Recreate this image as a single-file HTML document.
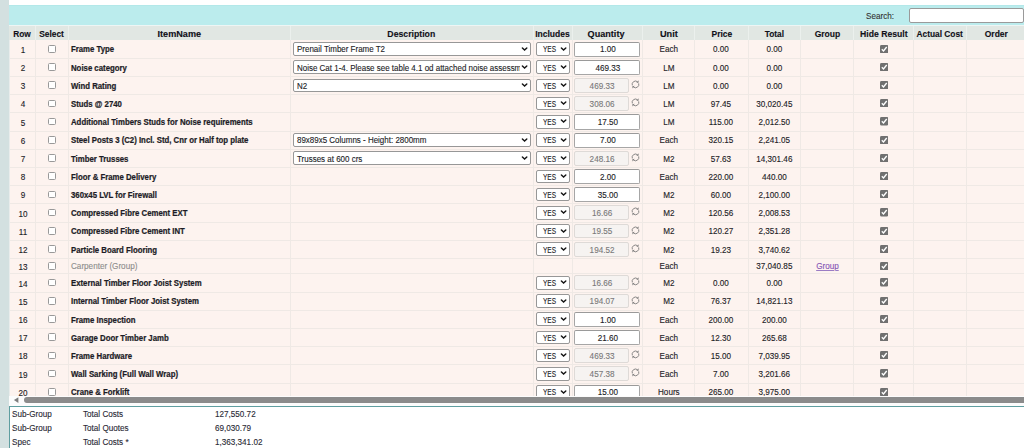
<!DOCTYPE html>
<html><head><meta charset="utf-8"><style>
html,body{margin:0;padding:0;}
body{width:1024px;height:448px;overflow:hidden;position:relative;background:#fff;font-family:"Liberation Sans",sans-serif;color:#1c1c26;}
div{box-sizing:border-box;}
.a{position:absolute;}
.t{position:absolute;white-space:nowrap;font-size:8.4px;transform:scaleX(0.97);-webkit-text-stroke:0.12px currentColor;}
.l{transform-origin:0 50%;}
.c{text-align:center;}
.b{font-weight:bold;}
.hd{font-size:8.8px;font-weight:bold;color:#101018;}
.ln{position:absolute;background:#efe9e5;}
.box{position:absolute;background:#fff;border:1px solid #979797;border-radius:2px;}
.inp{position:absolute;background:#fff;border:1px solid #a6a6a6;border-top-color:#9a9a9a;border-radius:2px;}
.dis{position:absolute;background:#f6f3f1;border:1px solid #dedad7;border-radius:2px;}
.cb{position:absolute;width:8px;height:7.8px;border:1px solid #999;border-radius:1.5px;background:#fff;}
</style></head><body>

<div class="a" style="left:0;top:0;width:8.5px;height:448px;background:#d3e0e0"></div>
<div class="a" style="left:8.5px;top:5px;width:1016px;height:20px;background:#bbeced;border-top:1px solid #b3e8e9"></div>
<div class="t l" style="left:866px;top:10.5px;line-height:10px;color:#333">Search:</div>
<div class="a" style="left:909.4px;top:8.4px;width:114.3px;height:14.6px;background:#fff;border:1px solid #9a9a9a;border-radius:2px"></div>
<div class="a" style="left:8.5px;top:25px;width:1016px;height:371px;background:#e9eceb"></div>
<div class="a" style="left:9.3px;top:25px;width:1016px;height:1px;background:#eef5f4"></div>
<div class="a" style="left:9.3px;top:26px;width:1016px;height:14px;background:#e1e7e3"></div>
<div class="a" style="left:9.7px;top:40px;width:1016px;height:361.2px;background:#fdf3ef"></div>
<div class="a" style="left:34.8px;top:26px;width:1px;height:14px;background:#ebf0ed"></div>
<div class="a" style="left:67.8px;top:26px;width:1px;height:14px;background:#ebf0ed"></div>
<div class="a" style="left:290.4px;top:26px;width:1px;height:14px;background:#ebf0ed"></div>
<div class="a" style="left:533px;top:26px;width:1px;height:14px;background:#ebf0ed"></div>
<div class="a" style="left:571.9px;top:26px;width:1px;height:14px;background:#ebf0ed"></div>
<div class="a" style="left:642px;top:26px;width:1px;height:14px;background:#ebf0ed"></div>
<div class="a" style="left:693.7px;top:26px;width:1px;height:14px;background:#ebf0ed"></div>
<div class="a" style="left:747.5px;top:26px;width:1px;height:14px;background:#ebf0ed"></div>
<div class="a" style="left:800.2px;top:26px;width:1px;height:14px;background:#ebf0ed"></div>
<div class="a" style="left:853.1px;top:26px;width:1px;height:14px;background:#ebf0ed"></div>
<div class="a" style="left:912.8px;top:26px;width:1px;height:14px;background:#ebf0ed"></div>
<div class="a" style="left:966.2px;top:26px;width:1px;height:14px;background:#ebf0ed"></div>
<div class="t c hd" style="left:8.8px;top:26.75px;width:26px;line-height:15px;transform:scaleX(0.943)">Row</div>
<div class="t c hd" style="left:34.7px;top:26.75px;width:33px;line-height:15px;transform:scaleX(0.954)">Select</div>
<div class="t c hd" style="left:68.2px;top:26.75px;width:222.6px;line-height:15px;transform:scaleX(1.035)">ItemName</div>
<div class="t c hd" style="left:290.3px;top:26.75px;width:242.6px;line-height:15px;transform:scaleX(0.989)">Description</div>
<div class="t c hd" style="left:532.5px;top:26.75px;width:38.9px;line-height:15px;transform:scaleX(0.970)">Includes</div>
<div class="t c hd" style="left:571px;top:26.75px;width:70.1px;line-height:15px;transform:scaleX(1.033)">Quantity</div>
<div class="t c hd" style="left:642.7px;top:26.75px;width:51.7px;line-height:15px;transform:scaleX(1.043)">Unit</div>
<div class="t c hd" style="left:694.8px;top:26.75px;width:53.8px;line-height:15px;transform:scaleX(0.965)">Price</div>
<div class="t c hd" style="left:748px;top:26.75px;width:52.7px;line-height:15px;transform:scaleX(0.946)">Total</div>
<div class="t c hd" style="left:800.7px;top:26.75px;width:52.9px;line-height:15px;transform:scaleX(0.970)">Group</div>
<div class="t c hd" style="left:853.6px;top:26.75px;width:59.7px;line-height:15px;transform:scaleX(0.983)">Hide Result</div>
<div class="t c hd" style="left:912.8px;top:26.75px;width:53.4px;line-height:15px;transform:scaleX(0.950)">Actual Cost</div>
<div class="t c hd" style="left:966.7px;top:26.75px;width:58.6px;line-height:15px;transform:scaleX(0.966)">Order</div>
<div class="ln" style="left:9.7px;top:58px;width:1016px;height:1px"></div>
<div class="ln" style="left:9.7px;top:76px;width:1016px;height:1px"></div>
<div class="ln" style="left:9.7px;top:94px;width:1016px;height:1px"></div>
<div class="ln" style="left:9.7px;top:112px;width:1016px;height:1px"></div>
<div class="ln" style="left:9.7px;top:131px;width:1016px;height:1px"></div>
<div class="ln" style="left:9.7px;top:149px;width:1016px;height:1px"></div>
<div class="ln" style="left:9.7px;top:167px;width:1016px;height:1px"></div>
<div class="ln" style="left:9.7px;top:185px;width:1016px;height:1px"></div>
<div class="ln" style="left:9.7px;top:203px;width:1016px;height:1px"></div>
<div class="ln" style="left:9.7px;top:222px;width:1016px;height:1px"></div>
<div class="ln" style="left:9.7px;top:240px;width:1016px;height:1px"></div>
<div class="ln" style="left:9.7px;top:258px;width:1016px;height:1px"></div>
<div class="ln" style="left:9.7px;top:273px;width:1016px;height:1px"></div>
<div class="ln" style="left:9.7px;top:292px;width:1016px;height:1px"></div>
<div class="ln" style="left:9.7px;top:310px;width:1016px;height:1px"></div>
<div class="ln" style="left:9.7px;top:328px;width:1016px;height:1px"></div>
<div class="ln" style="left:9.7px;top:346px;width:1016px;height:1px"></div>
<div class="ln" style="left:9.7px;top:364px;width:1016px;height:1px"></div>
<div class="ln" style="left:9.7px;top:383px;width:1016px;height:1px"></div>
<div class="ln" style="left:9.7px;top:401px;width:1016px;height:1px"></div>
<div class="ln" style="left:34.8px;top:40px;width:1px;height:361.2px"></div>
<div class="ln" style="left:67.8px;top:40px;width:1px;height:361.2px"></div>
<div class="ln" style="left:290.4px;top:40px;width:1px;height:361.2px"></div>
<div class="ln" style="left:533px;top:40px;width:1px;height:361.2px"></div>
<div class="ln" style="left:571.9px;top:40px;width:1px;height:361.2px"></div>
<div class="ln" style="left:642px;top:40px;width:1px;height:361.2px"></div>
<div class="ln" style="left:693.7px;top:40px;width:1px;height:361.2px"></div>
<div class="ln" style="left:747.5px;top:40px;width:1px;height:361.2px"></div>
<div class="ln" style="left:800.2px;top:40px;width:1px;height:361.2px"></div>
<div class="ln" style="left:853.1px;top:40px;width:1px;height:361.2px"></div>
<div class="ln" style="left:912.8px;top:40px;width:1px;height:361.2px"></div>
<div class="ln" style="left:966.2px;top:40px;width:1px;height:361.2px"></div>
<div class="t c" style="left:10.1px;top:40.7px;width:26px;line-height:18.2px;">1</div>
<div class="cb" style="left:48px;top:44.9px"></div>
<div class="t l b" style="left:71px;top:40.4px;line-height:18.2px;transform:scaleX(0.93);-webkit-text-stroke:0.22px currentColor">Frame Type</div>
<div class="box" style="left:293.2px;top:42.2px;width:238.2px;height:13.7px"></div>
<div class="a" style="left:294px;top:40px;width:225.5px;height:18.2px;overflow:hidden"><div class="t l" style="left:2.7px;top:0.4px;line-height:18.2px;transform:scaleX(0.952)">Prenail Timber Frame T2</div></div>
<svg class="a" style="left:520.6px;top:45.6px" width="8" height="6" viewBox="0 0 8 6"><path d="M1.4 1.9 L3.6 4.0 L5.8 1.9" fill="none" stroke="#151515" stroke-width="1.45" stroke-linecap="round"/></svg>
<div class="box" style="left:536.2px;top:42.2px;width:33.5px;height:13.7px"></div>
<div class="t l" style="left:542.6px;top:40.4px;line-height:18.2px;transform:scaleX(0.78)">YES</div>
<svg class="a" style="left:560px;top:45.6px" width="8" height="6" viewBox="0 0 8 6"><path d="M1.4 1.9 L3.6 4.0 L5.8 1.9" fill="none" stroke="#151515" stroke-width="1.45" stroke-linecap="round"/></svg>
<div class="inp" style="left:574px;top:41.5px;width:66.4px;height:15.3px"></div>
<div class="t c" style="left:574.8px;top:40.4px;width:65.7px;line-height:18.2px;">1.00</div>
<div class="t c" style="left:642.5px;top:40.4px;width:51.7px;line-height:18.2px;">Each</div>
<div class="t c" style="left:694.2px;top:40.4px;width:53.8px;line-height:18.2px;">0.00</div>
<div class="t c" style="left:748px;top:40.4px;width:52.7px;line-height:18.2px;">0.00</div>
<svg class="a" style="left:879.6px;top:44.5px" width="8.4" height="8.4" viewBox="0 0 8.4 8.4"><rect x="0" y="0" width="8.4" height="8.4" rx="1.5" fill="#707070"/><path d="M1.8 4.3 L3.5 6 L6.7 2" fill="none" stroke="#fff" stroke-width="1.3"/></svg>
<div class="t c" style="left:10.1px;top:58.9px;width:26px;line-height:18.2px;">2</div>
<div class="cb" style="left:48px;top:63.1px"></div>
<div class="t l b" style="left:71px;top:58.6px;line-height:18.2px;transform:scaleX(0.93);-webkit-text-stroke:0.22px currentColor">Noise category</div>
<div class="box" style="left:293.2px;top:60.4px;width:238.2px;height:13.7px"></div>
<div class="a" style="left:294px;top:58.2px;width:225.5px;height:18.2px;overflow:hidden"><div class="t l" style="left:2.7px;top:0.4px;line-height:18.2px;transform:scaleX(0.952)">Noise Cat 1-4. Please see table 4.1 od attached noise assessment</div></div>
<svg class="a" style="left:520.6px;top:63.8px" width="8" height="6" viewBox="0 0 8 6"><path d="M1.4 1.9 L3.6 4.0 L5.8 1.9" fill="none" stroke="#151515" stroke-width="1.45" stroke-linecap="round"/></svg>
<div class="box" style="left:536.2px;top:60.4px;width:33.5px;height:13.7px"></div>
<div class="t l" style="left:542.6px;top:58.6px;line-height:18.2px;transform:scaleX(0.78)">YES</div>
<svg class="a" style="left:560px;top:63.8px" width="8" height="6" viewBox="0 0 8 6"><path d="M1.4 1.9 L3.6 4.0 L5.8 1.9" fill="none" stroke="#151515" stroke-width="1.45" stroke-linecap="round"/></svg>
<div class="inp" style="left:574px;top:59.7px;width:66.4px;height:15.3px"></div>
<div class="t c" style="left:574.8px;top:58.6px;width:65.7px;line-height:18.2px;">469.33</div>
<div class="t c" style="left:642.5px;top:58.6px;width:51.7px;line-height:18.2px;">LM</div>
<div class="t c" style="left:694.2px;top:58.6px;width:53.8px;line-height:18.2px;">0.00</div>
<div class="t c" style="left:748px;top:58.6px;width:52.7px;line-height:18.2px;">0.00</div>
<svg class="a" style="left:879.6px;top:62.7px" width="8.4" height="8.4" viewBox="0 0 8.4 8.4"><rect x="0" y="0" width="8.4" height="8.4" rx="1.5" fill="#707070"/><path d="M1.8 4.3 L3.5 6 L6.7 2" fill="none" stroke="#fff" stroke-width="1.3"/></svg>
<div class="t c" style="left:10.1px;top:77.1px;width:26px;line-height:18.2px;">3</div>
<div class="cb" style="left:48px;top:81.3px"></div>
<div class="t l b" style="left:71px;top:76.8px;line-height:18.2px;transform:scaleX(0.93);-webkit-text-stroke:0.22px currentColor">Wind Rating</div>
<div class="box" style="left:293.2px;top:78.6px;width:238.2px;height:13.7px"></div>
<div class="a" style="left:294px;top:76.4px;width:225.5px;height:18.2px;overflow:hidden"><div class="t l" style="left:2.7px;top:0.4px;line-height:18.2px;transform:scaleX(0.952)">N2</div></div>
<svg class="a" style="left:520.6px;top:82px" width="8" height="6" viewBox="0 0 8 6"><path d="M1.4 1.9 L3.6 4.0 L5.8 1.9" fill="none" stroke="#151515" stroke-width="1.45" stroke-linecap="round"/></svg>
<div class="box" style="left:536.2px;top:78.6px;width:33.5px;height:13.7px"></div>
<div class="t l" style="left:542.6px;top:76.8px;line-height:18.2px;transform:scaleX(0.78)">YES</div>
<svg class="a" style="left:560px;top:82px" width="8" height="6" viewBox="0 0 8 6"><path d="M1.4 1.9 L3.6 4.0 L5.8 1.9" fill="none" stroke="#151515" stroke-width="1.45" stroke-linecap="round"/></svg>
<div class="dis" style="left:574.3px;top:78px;width:54.4px;height:14.8px"></div>
<div class="t c" style="left:575.1px;top:76.8px;width:54.1px;line-height:18.2px;color:#7a7a7a">469.33</div>
<svg class="a" style="left:630.6px;top:80px" width="9" height="9" viewBox="0 0 9 9"><path d="M1.31 5.44 A3.35 3.35 0 0 1 6.56 1.76" fill="none" stroke="#7a7a7a" stroke-width="0.9"/><path d="M7.67 2.62 L5.36 2.98 L7.45 0.30 Z" fill="#7a7a7a"/><path d="M7.69 3.36 A3.35 3.35 0 0 1 2.44 7.04" fill="none" stroke="#7a7a7a" stroke-width="0.9"/><path d="M1.33 6.18 L3.64 5.82 L1.55 8.50 Z" fill="#7a7a7a"/></svg>
<div class="t c" style="left:642.5px;top:76.8px;width:51.7px;line-height:18.2px;">LM</div>
<div class="t c" style="left:694.2px;top:76.8px;width:53.8px;line-height:18.2px;">0.00</div>
<div class="t c" style="left:748px;top:76.8px;width:52.7px;line-height:18.2px;">0.00</div>
<svg class="a" style="left:879.6px;top:80.9px" width="8.4" height="8.4" viewBox="0 0 8.4 8.4"><rect x="0" y="0" width="8.4" height="8.4" rx="1.5" fill="#707070"/><path d="M1.8 4.3 L3.5 6 L6.7 2" fill="none" stroke="#fff" stroke-width="1.3"/></svg>
<div class="t c" style="left:10.1px;top:95.3px;width:26px;line-height:18.2px;">4</div>
<div class="cb" style="left:48px;top:99.5px"></div>
<div class="t l b" style="left:71px;top:95px;line-height:18.2px;transform:scaleX(0.93);-webkit-text-stroke:0.22px currentColor">Studs @ 2740</div>
<div class="box" style="left:536.2px;top:96.8px;width:33.5px;height:13.7px"></div>
<div class="t l" style="left:542.6px;top:95px;line-height:18.2px;transform:scaleX(0.78)">YES</div>
<svg class="a" style="left:560px;top:100.2px" width="8" height="6" viewBox="0 0 8 6"><path d="M1.4 1.9 L3.6 4.0 L5.8 1.9" fill="none" stroke="#151515" stroke-width="1.45" stroke-linecap="round"/></svg>
<div class="dis" style="left:574.3px;top:96.2px;width:54.4px;height:14.8px"></div>
<div class="t c" style="left:575.1px;top:95px;width:54.1px;line-height:18.2px;color:#7a7a7a">308.06</div>
<svg class="a" style="left:630.6px;top:98.2px" width="9" height="9" viewBox="0 0 9 9"><path d="M1.31 5.44 A3.35 3.35 0 0 1 6.56 1.76" fill="none" stroke="#7a7a7a" stroke-width="0.9"/><path d="M7.67 2.62 L5.36 2.98 L7.45 0.30 Z" fill="#7a7a7a"/><path d="M7.69 3.36 A3.35 3.35 0 0 1 2.44 7.04" fill="none" stroke="#7a7a7a" stroke-width="0.9"/><path d="M1.33 6.18 L3.64 5.82 L1.55 8.50 Z" fill="#7a7a7a"/></svg>
<div class="t c" style="left:642.5px;top:95px;width:51.7px;line-height:18.2px;">LM</div>
<div class="t c" style="left:694.2px;top:95px;width:53.8px;line-height:18.2px;">97.45</div>
<div class="t c" style="left:748px;top:95px;width:52.7px;line-height:18.2px;">30,020.45</div>
<svg class="a" style="left:879.6px;top:99.1px" width="8.4" height="8.4" viewBox="0 0 8.4 8.4"><rect x="0" y="0" width="8.4" height="8.4" rx="1.5" fill="#707070"/><path d="M1.8 4.3 L3.5 6 L6.7 2" fill="none" stroke="#fff" stroke-width="1.3"/></svg>
<div class="t c" style="left:10.1px;top:113.5px;width:26px;line-height:18.2px;">5</div>
<div class="cb" style="left:48px;top:117.7px"></div>
<div class="t l b" style="left:71px;top:113.2px;line-height:18.2px;transform:scaleX(0.93);-webkit-text-stroke:0.22px currentColor">Additional Timbers Studs for Noise requirements</div>
<div class="box" style="left:536.2px;top:115px;width:33.5px;height:13.7px"></div>
<div class="t l" style="left:542.6px;top:113.2px;line-height:18.2px;transform:scaleX(0.78)">YES</div>
<svg class="a" style="left:560px;top:118.4px" width="8" height="6" viewBox="0 0 8 6"><path d="M1.4 1.9 L3.6 4.0 L5.8 1.9" fill="none" stroke="#151515" stroke-width="1.45" stroke-linecap="round"/></svg>
<div class="inp" style="left:574px;top:114.3px;width:66.4px;height:15.3px"></div>
<div class="t c" style="left:574.8px;top:113.2px;width:65.7px;line-height:18.2px;">17.50</div>
<div class="t c" style="left:642.5px;top:113.2px;width:51.7px;line-height:18.2px;">LM</div>
<div class="t c" style="left:694.2px;top:113.2px;width:53.8px;line-height:18.2px;">115.00</div>
<div class="t c" style="left:748px;top:113.2px;width:52.7px;line-height:18.2px;">2,012.50</div>
<svg class="a" style="left:879.6px;top:117.3px" width="8.4" height="8.4" viewBox="0 0 8.4 8.4"><rect x="0" y="0" width="8.4" height="8.4" rx="1.5" fill="#707070"/><path d="M1.8 4.3 L3.5 6 L6.7 2" fill="none" stroke="#fff" stroke-width="1.3"/></svg>
<div class="t c" style="left:10.1px;top:131.7px;width:26px;line-height:18.2px;">6</div>
<div class="cb" style="left:48px;top:135.9px"></div>
<div class="t l b" style="left:71px;top:131.4px;line-height:18.2px;transform:scaleX(0.93);-webkit-text-stroke:0.22px currentColor">Steel Posts 3 (C2) Incl. Std, Cnr or Half top plate</div>
<div class="box" style="left:293.2px;top:133.2px;width:238.2px;height:13.7px"></div>
<div class="a" style="left:294px;top:131px;width:225.5px;height:18.2px;overflow:hidden"><div class="t l" style="left:2.7px;top:0.4px;line-height:18.2px;transform:scaleX(0.952)">89x89x5 Columns - Height: 2800mm</div></div>
<svg class="a" style="left:520.6px;top:136.6px" width="8" height="6" viewBox="0 0 8 6"><path d="M1.4 1.9 L3.6 4.0 L5.8 1.9" fill="none" stroke="#151515" stroke-width="1.45" stroke-linecap="round"/></svg>
<div class="box" style="left:536.2px;top:133.2px;width:33.5px;height:13.7px"></div>
<div class="t l" style="left:542.6px;top:131.4px;line-height:18.2px;transform:scaleX(0.78)">YES</div>
<svg class="a" style="left:560px;top:136.6px" width="8" height="6" viewBox="0 0 8 6"><path d="M1.4 1.9 L3.6 4.0 L5.8 1.9" fill="none" stroke="#151515" stroke-width="1.45" stroke-linecap="round"/></svg>
<div class="inp" style="left:574px;top:132.5px;width:66.4px;height:15.3px"></div>
<div class="t c" style="left:574.8px;top:131.4px;width:65.7px;line-height:18.2px;">7.00</div>
<div class="t c" style="left:642.5px;top:131.4px;width:51.7px;line-height:18.2px;">Each</div>
<div class="t c" style="left:694.2px;top:131.4px;width:53.8px;line-height:18.2px;">320.15</div>
<div class="t c" style="left:748px;top:131.4px;width:52.7px;line-height:18.2px;">2,241.05</div>
<svg class="a" style="left:879.6px;top:135.5px" width="8.4" height="8.4" viewBox="0 0 8.4 8.4"><rect x="0" y="0" width="8.4" height="8.4" rx="1.5" fill="#707070"/><path d="M1.8 4.3 L3.5 6 L6.7 2" fill="none" stroke="#fff" stroke-width="1.3"/></svg>
<div class="t c" style="left:10.1px;top:149.9px;width:26px;line-height:18.2px;">7</div>
<div class="cb" style="left:48px;top:154.1px"></div>
<div class="t l b" style="left:71px;top:149.6px;line-height:18.2px;transform:scaleX(0.93);-webkit-text-stroke:0.22px currentColor">Timber Trusses</div>
<div class="box" style="left:293.2px;top:151.4px;width:238.2px;height:13.7px"></div>
<div class="a" style="left:294px;top:149.2px;width:225.5px;height:18.2px;overflow:hidden"><div class="t l" style="left:2.7px;top:0.4px;line-height:18.2px;transform:scaleX(0.952)">Trusses at 600 crs</div></div>
<svg class="a" style="left:520.6px;top:154.8px" width="8" height="6" viewBox="0 0 8 6"><path d="M1.4 1.9 L3.6 4.0 L5.8 1.9" fill="none" stroke="#151515" stroke-width="1.45" stroke-linecap="round"/></svg>
<div class="box" style="left:536.2px;top:151.4px;width:33.5px;height:13.7px"></div>
<div class="t l" style="left:542.6px;top:149.6px;line-height:18.2px;transform:scaleX(0.78)">YES</div>
<svg class="a" style="left:560px;top:154.8px" width="8" height="6" viewBox="0 0 8 6"><path d="M1.4 1.9 L3.6 4.0 L5.8 1.9" fill="none" stroke="#151515" stroke-width="1.45" stroke-linecap="round"/></svg>
<div class="dis" style="left:574.3px;top:150.8px;width:54.4px;height:14.8px"></div>
<div class="t c" style="left:575.1px;top:149.6px;width:54.1px;line-height:18.2px;color:#7a7a7a">248.16</div>
<svg class="a" style="left:630.6px;top:152.8px" width="9" height="9" viewBox="0 0 9 9"><path d="M1.31 5.44 A3.35 3.35 0 0 1 6.56 1.76" fill="none" stroke="#7a7a7a" stroke-width="0.9"/><path d="M7.67 2.62 L5.36 2.98 L7.45 0.30 Z" fill="#7a7a7a"/><path d="M7.69 3.36 A3.35 3.35 0 0 1 2.44 7.04" fill="none" stroke="#7a7a7a" stroke-width="0.9"/><path d="M1.33 6.18 L3.64 5.82 L1.55 8.50 Z" fill="#7a7a7a"/></svg>
<div class="t c" style="left:642.5px;top:149.6px;width:51.7px;line-height:18.2px;">M2</div>
<div class="t c" style="left:694.2px;top:149.6px;width:53.8px;line-height:18.2px;">57.63</div>
<div class="t c" style="left:748px;top:149.6px;width:52.7px;line-height:18.2px;">14,301.46</div>
<svg class="a" style="left:879.6px;top:153.7px" width="8.4" height="8.4" viewBox="0 0 8.4 8.4"><rect x="0" y="0" width="8.4" height="8.4" rx="1.5" fill="#707070"/><path d="M1.8 4.3 L3.5 6 L6.7 2" fill="none" stroke="#fff" stroke-width="1.3"/></svg>
<div class="t c" style="left:10.1px;top:168.1px;width:26px;line-height:18.2px;">8</div>
<div class="cb" style="left:48px;top:172.3px"></div>
<div class="t l b" style="left:71px;top:167.8px;line-height:18.2px;transform:scaleX(0.93);-webkit-text-stroke:0.22px currentColor">Floor &amp; Frame Delivery</div>
<div class="box" style="left:536.2px;top:169.6px;width:33.5px;height:13.7px"></div>
<div class="t l" style="left:542.6px;top:167.8px;line-height:18.2px;transform:scaleX(0.78)">YES</div>
<svg class="a" style="left:560px;top:173px" width="8" height="6" viewBox="0 0 8 6"><path d="M1.4 1.9 L3.6 4.0 L5.8 1.9" fill="none" stroke="#151515" stroke-width="1.45" stroke-linecap="round"/></svg>
<div class="inp" style="left:574px;top:168.9px;width:66.4px;height:15.3px"></div>
<div class="t c" style="left:574.8px;top:167.8px;width:65.7px;line-height:18.2px;">2.00</div>
<div class="t c" style="left:642.5px;top:167.8px;width:51.7px;line-height:18.2px;">Each</div>
<div class="t c" style="left:694.2px;top:167.8px;width:53.8px;line-height:18.2px;">220.00</div>
<div class="t c" style="left:748px;top:167.8px;width:52.7px;line-height:18.2px;">440.00</div>
<svg class="a" style="left:879.6px;top:171.9px" width="8.4" height="8.4" viewBox="0 0 8.4 8.4"><rect x="0" y="0" width="8.4" height="8.4" rx="1.5" fill="#707070"/><path d="M1.8 4.3 L3.5 6 L6.7 2" fill="none" stroke="#fff" stroke-width="1.3"/></svg>
<div class="t c" style="left:10.1px;top:186.3px;width:26px;line-height:18.2px;">9</div>
<div class="cb" style="left:48px;top:190.5px"></div>
<div class="t l b" style="left:71px;top:186px;line-height:18.2px;transform:scaleX(0.93);-webkit-text-stroke:0.22px currentColor">360x45 LVL for Firewall</div>
<div class="box" style="left:536.2px;top:187.8px;width:33.5px;height:13.7px"></div>
<div class="t l" style="left:542.6px;top:186px;line-height:18.2px;transform:scaleX(0.78)">YES</div>
<svg class="a" style="left:560px;top:191.2px" width="8" height="6" viewBox="0 0 8 6"><path d="M1.4 1.9 L3.6 4.0 L5.8 1.9" fill="none" stroke="#151515" stroke-width="1.45" stroke-linecap="round"/></svg>
<div class="inp" style="left:574px;top:187.1px;width:66.4px;height:15.3px"></div>
<div class="t c" style="left:574.8px;top:186px;width:65.7px;line-height:18.2px;">35.00</div>
<div class="t c" style="left:642.5px;top:186px;width:51.7px;line-height:18.2px;">M2</div>
<div class="t c" style="left:694.2px;top:186px;width:53.8px;line-height:18.2px;">60.00</div>
<div class="t c" style="left:748px;top:186px;width:52.7px;line-height:18.2px;">2,100.00</div>
<svg class="a" style="left:879.6px;top:190.1px" width="8.4" height="8.4" viewBox="0 0 8.4 8.4"><rect x="0" y="0" width="8.4" height="8.4" rx="1.5" fill="#707070"/><path d="M1.8 4.3 L3.5 6 L6.7 2" fill="none" stroke="#fff" stroke-width="1.3"/></svg>
<div class="t c" style="left:10.1px;top:204.5px;width:26px;line-height:18.2px;">10</div>
<div class="cb" style="left:48px;top:208.7px"></div>
<div class="t l b" style="left:71px;top:204.2px;line-height:18.2px;transform:scaleX(0.93);-webkit-text-stroke:0.22px currentColor">Compressed Fibre Cement EXT</div>
<div class="box" style="left:536.2px;top:206px;width:33.5px;height:13.7px"></div>
<div class="t l" style="left:542.6px;top:204.2px;line-height:18.2px;transform:scaleX(0.78)">YES</div>
<svg class="a" style="left:560px;top:209.4px" width="8" height="6" viewBox="0 0 8 6"><path d="M1.4 1.9 L3.6 4.0 L5.8 1.9" fill="none" stroke="#151515" stroke-width="1.45" stroke-linecap="round"/></svg>
<div class="dis" style="left:574.3px;top:205.4px;width:54.4px;height:14.8px"></div>
<div class="t c" style="left:575.1px;top:204.2px;width:54.1px;line-height:18.2px;color:#7a7a7a">16.66</div>
<svg class="a" style="left:630.6px;top:207.4px" width="9" height="9" viewBox="0 0 9 9"><path d="M1.31 5.44 A3.35 3.35 0 0 1 6.56 1.76" fill="none" stroke="#7a7a7a" stroke-width="0.9"/><path d="M7.67 2.62 L5.36 2.98 L7.45 0.30 Z" fill="#7a7a7a"/><path d="M7.69 3.36 A3.35 3.35 0 0 1 2.44 7.04" fill="none" stroke="#7a7a7a" stroke-width="0.9"/><path d="M1.33 6.18 L3.64 5.82 L1.55 8.50 Z" fill="#7a7a7a"/></svg>
<div class="t c" style="left:642.5px;top:204.2px;width:51.7px;line-height:18.2px;">M2</div>
<div class="t c" style="left:694.2px;top:204.2px;width:53.8px;line-height:18.2px;">120.56</div>
<div class="t c" style="left:748px;top:204.2px;width:52.7px;line-height:18.2px;">2,008.53</div>
<svg class="a" style="left:879.6px;top:208.3px" width="8.4" height="8.4" viewBox="0 0 8.4 8.4"><rect x="0" y="0" width="8.4" height="8.4" rx="1.5" fill="#707070"/><path d="M1.8 4.3 L3.5 6 L6.7 2" fill="none" stroke="#fff" stroke-width="1.3"/></svg>
<div class="t c" style="left:10.1px;top:222.7px;width:26px;line-height:18.2px;">11</div>
<div class="cb" style="left:48px;top:226.9px"></div>
<div class="t l b" style="left:71px;top:222.4px;line-height:18.2px;transform:scaleX(0.93);-webkit-text-stroke:0.22px currentColor">Compressed Fibre Cement INT</div>
<div class="box" style="left:536.2px;top:224.2px;width:33.5px;height:13.7px"></div>
<div class="t l" style="left:542.6px;top:222.4px;line-height:18.2px;transform:scaleX(0.78)">YES</div>
<svg class="a" style="left:560px;top:227.6px" width="8" height="6" viewBox="0 0 8 6"><path d="M1.4 1.9 L3.6 4.0 L5.8 1.9" fill="none" stroke="#151515" stroke-width="1.45" stroke-linecap="round"/></svg>
<div class="dis" style="left:574.3px;top:223.6px;width:54.4px;height:14.8px"></div>
<div class="t c" style="left:575.1px;top:222.4px;width:54.1px;line-height:18.2px;color:#7a7a7a">19.55</div>
<svg class="a" style="left:630.6px;top:225.6px" width="9" height="9" viewBox="0 0 9 9"><path d="M1.31 5.44 A3.35 3.35 0 0 1 6.56 1.76" fill="none" stroke="#7a7a7a" stroke-width="0.9"/><path d="M7.67 2.62 L5.36 2.98 L7.45 0.30 Z" fill="#7a7a7a"/><path d="M7.69 3.36 A3.35 3.35 0 0 1 2.44 7.04" fill="none" stroke="#7a7a7a" stroke-width="0.9"/><path d="M1.33 6.18 L3.64 5.82 L1.55 8.50 Z" fill="#7a7a7a"/></svg>
<div class="t c" style="left:642.5px;top:222.4px;width:51.7px;line-height:18.2px;">M2</div>
<div class="t c" style="left:694.2px;top:222.4px;width:53.8px;line-height:18.2px;">120.27</div>
<div class="t c" style="left:748px;top:222.4px;width:52.7px;line-height:18.2px;">2,351.28</div>
<svg class="a" style="left:879.6px;top:226.5px" width="8.4" height="8.4" viewBox="0 0 8.4 8.4"><rect x="0" y="0" width="8.4" height="8.4" rx="1.5" fill="#707070"/><path d="M1.8 4.3 L3.5 6 L6.7 2" fill="none" stroke="#fff" stroke-width="1.3"/></svg>
<div class="t c" style="left:10.1px;top:240.9px;width:26px;line-height:18.2px;">12</div>
<div class="cb" style="left:48px;top:245.1px"></div>
<div class="t l b" style="left:71px;top:240.6px;line-height:18.2px;transform:scaleX(0.93);-webkit-text-stroke:0.22px currentColor">Particle Board Flooring</div>
<div class="box" style="left:536.2px;top:242.4px;width:33.5px;height:13.7px"></div>
<div class="t l" style="left:542.6px;top:240.6px;line-height:18.2px;transform:scaleX(0.78)">YES</div>
<svg class="a" style="left:560px;top:245.8px" width="8" height="6" viewBox="0 0 8 6"><path d="M1.4 1.9 L3.6 4.0 L5.8 1.9" fill="none" stroke="#151515" stroke-width="1.45" stroke-linecap="round"/></svg>
<div class="dis" style="left:574.3px;top:241.8px;width:54.4px;height:14.8px"></div>
<div class="t c" style="left:575.1px;top:240.6px;width:54.1px;line-height:18.2px;color:#7a7a7a">194.52</div>
<svg class="a" style="left:630.6px;top:243.8px" width="9" height="9" viewBox="0 0 9 9"><path d="M1.31 5.44 A3.35 3.35 0 0 1 6.56 1.76" fill="none" stroke="#7a7a7a" stroke-width="0.9"/><path d="M7.67 2.62 L5.36 2.98 L7.45 0.30 Z" fill="#7a7a7a"/><path d="M7.69 3.36 A3.35 3.35 0 0 1 2.44 7.04" fill="none" stroke="#7a7a7a" stroke-width="0.9"/><path d="M1.33 6.18 L3.64 5.82 L1.55 8.50 Z" fill="#7a7a7a"/></svg>
<div class="t c" style="left:642.5px;top:240.6px;width:51.7px;line-height:18.2px;">M2</div>
<div class="t c" style="left:694.2px;top:240.6px;width:53.8px;line-height:18.2px;">19.23</div>
<div class="t c" style="left:748px;top:240.6px;width:52.7px;line-height:18.2px;">3,740.62</div>
<svg class="a" style="left:879.6px;top:244.7px" width="8.4" height="8.4" viewBox="0 0 8.4 8.4"><rect x="0" y="0" width="8.4" height="8.4" rx="1.5" fill="#707070"/><path d="M1.8 4.3 L3.5 6 L6.7 2" fill="none" stroke="#fff" stroke-width="1.3"/></svg>
<div class="t c" style="left:10.1px;top:259.5px;width:26px;line-height:15.4px;">13</div>
<div class="cb" style="left:48px;top:262.3px"></div>
<div class="t l" style="left:71px;top:259.2px;line-height:15.4px;color:#8d8d8d">Carpenter (Group)</div>
<div class="t c" style="left:642.5px;top:259.2px;width:51.7px;line-height:15.4px;">Each</div>
<div class="t c" style="left:748px;top:259.2px;width:52.7px;line-height:15.4px;">37,040.85</div>
<div class="t c" style="left:800.7px;top:259.2px;width:52.9px;line-height:15.4px;color:#8655b6;text-decoration:underline;text-decoration-color:#9b7cc4">Group</div>
<svg class="a" style="left:879.6px;top:261.9px" width="8.4" height="8.4" viewBox="0 0 8.4 8.4"><rect x="0" y="0" width="8.4" height="8.4" rx="1.5" fill="#707070"/><path d="M1.8 4.3 L3.5 6 L6.7 2" fill="none" stroke="#fff" stroke-width="1.3"/></svg>
<div class="t c" style="left:10.1px;top:274.5px;width:26px;line-height:18.2px;">14</div>
<div class="cb" style="left:48px;top:278.7px"></div>
<div class="t l b" style="left:71px;top:274.2px;line-height:18.2px;transform:scaleX(0.93);-webkit-text-stroke:0.22px currentColor">External Timber Floor Joist System</div>
<div class="box" style="left:536.2px;top:276px;width:33.5px;height:13.7px"></div>
<div class="t l" style="left:542.6px;top:274.2px;line-height:18.2px;transform:scaleX(0.78)">YES</div>
<svg class="a" style="left:560px;top:279.4px" width="8" height="6" viewBox="0 0 8 6"><path d="M1.4 1.9 L3.6 4.0 L5.8 1.9" fill="none" stroke="#151515" stroke-width="1.45" stroke-linecap="round"/></svg>
<div class="dis" style="left:574.3px;top:275.4px;width:54.4px;height:14.8px"></div>
<div class="t c" style="left:575.1px;top:274.2px;width:54.1px;line-height:18.2px;color:#7a7a7a">16.66</div>
<svg class="a" style="left:630.6px;top:277.4px" width="9" height="9" viewBox="0 0 9 9"><path d="M1.31 5.44 A3.35 3.35 0 0 1 6.56 1.76" fill="none" stroke="#7a7a7a" stroke-width="0.9"/><path d="M7.67 2.62 L5.36 2.98 L7.45 0.30 Z" fill="#7a7a7a"/><path d="M7.69 3.36 A3.35 3.35 0 0 1 2.44 7.04" fill="none" stroke="#7a7a7a" stroke-width="0.9"/><path d="M1.33 6.18 L3.64 5.82 L1.55 8.50 Z" fill="#7a7a7a"/></svg>
<div class="t c" style="left:642.5px;top:274.2px;width:51.7px;line-height:18.2px;">M2</div>
<div class="t c" style="left:694.2px;top:274.2px;width:53.8px;line-height:18.2px;">0.00</div>
<div class="t c" style="left:748px;top:274.2px;width:52.7px;line-height:18.2px;">0.00</div>
<svg class="a" style="left:879.6px;top:278.3px" width="8.4" height="8.4" viewBox="0 0 8.4 8.4"><rect x="0" y="0" width="8.4" height="8.4" rx="1.5" fill="#707070"/><path d="M1.8 4.3 L3.5 6 L6.7 2" fill="none" stroke="#fff" stroke-width="1.3"/></svg>
<div class="t c" style="left:10.1px;top:292.7px;width:26px;line-height:18.2px;">15</div>
<div class="cb" style="left:48px;top:296.9px"></div>
<div class="t l b" style="left:71px;top:292.4px;line-height:18.2px;transform:scaleX(0.93);-webkit-text-stroke:0.22px currentColor">Internal Timber Floor Joist System</div>
<div class="box" style="left:536.2px;top:294.2px;width:33.5px;height:13.7px"></div>
<div class="t l" style="left:542.6px;top:292.4px;line-height:18.2px;transform:scaleX(0.78)">YES</div>
<svg class="a" style="left:560px;top:297.6px" width="8" height="6" viewBox="0 0 8 6"><path d="M1.4 1.9 L3.6 4.0 L5.8 1.9" fill="none" stroke="#151515" stroke-width="1.45" stroke-linecap="round"/></svg>
<div class="dis" style="left:574.3px;top:293.6px;width:54.4px;height:14.8px"></div>
<div class="t c" style="left:575.1px;top:292.4px;width:54.1px;line-height:18.2px;color:#7a7a7a">194.07</div>
<svg class="a" style="left:630.6px;top:295.6px" width="9" height="9" viewBox="0 0 9 9"><path d="M1.31 5.44 A3.35 3.35 0 0 1 6.56 1.76" fill="none" stroke="#7a7a7a" stroke-width="0.9"/><path d="M7.67 2.62 L5.36 2.98 L7.45 0.30 Z" fill="#7a7a7a"/><path d="M7.69 3.36 A3.35 3.35 0 0 1 2.44 7.04" fill="none" stroke="#7a7a7a" stroke-width="0.9"/><path d="M1.33 6.18 L3.64 5.82 L1.55 8.50 Z" fill="#7a7a7a"/></svg>
<div class="t c" style="left:642.5px;top:292.4px;width:51.7px;line-height:18.2px;">M2</div>
<div class="t c" style="left:694.2px;top:292.4px;width:53.8px;line-height:18.2px;">76.37</div>
<div class="t c" style="left:748px;top:292.4px;width:52.7px;line-height:18.2px;">14,821.13</div>
<svg class="a" style="left:879.6px;top:296.5px" width="8.4" height="8.4" viewBox="0 0 8.4 8.4"><rect x="0" y="0" width="8.4" height="8.4" rx="1.5" fill="#707070"/><path d="M1.8 4.3 L3.5 6 L6.7 2" fill="none" stroke="#fff" stroke-width="1.3"/></svg>
<div class="t c" style="left:10.1px;top:310.9px;width:26px;line-height:18.2px;">16</div>
<div class="cb" style="left:48px;top:315.1px"></div>
<div class="t l b" style="left:71px;top:310.6px;line-height:18.2px;transform:scaleX(0.93);-webkit-text-stroke:0.22px currentColor">Frame Inspection</div>
<div class="box" style="left:536.2px;top:312.4px;width:33.5px;height:13.7px"></div>
<div class="t l" style="left:542.6px;top:310.6px;line-height:18.2px;transform:scaleX(0.78)">YES</div>
<svg class="a" style="left:560px;top:315.8px" width="8" height="6" viewBox="0 0 8 6"><path d="M1.4 1.9 L3.6 4.0 L5.8 1.9" fill="none" stroke="#151515" stroke-width="1.45" stroke-linecap="round"/></svg>
<div class="inp" style="left:574px;top:311.7px;width:66.4px;height:15.3px"></div>
<div class="t c" style="left:574.8px;top:310.6px;width:65.7px;line-height:18.2px;">1.00</div>
<div class="t c" style="left:642.5px;top:310.6px;width:51.7px;line-height:18.2px;">Each</div>
<div class="t c" style="left:694.2px;top:310.6px;width:53.8px;line-height:18.2px;">200.00</div>
<div class="t c" style="left:748px;top:310.6px;width:52.7px;line-height:18.2px;">200.00</div>
<svg class="a" style="left:879.6px;top:314.7px" width="8.4" height="8.4" viewBox="0 0 8.4 8.4"><rect x="0" y="0" width="8.4" height="8.4" rx="1.5" fill="#707070"/><path d="M1.8 4.3 L3.5 6 L6.7 2" fill="none" stroke="#fff" stroke-width="1.3"/></svg>
<div class="t c" style="left:10.1px;top:329.1px;width:26px;line-height:18.2px;">17</div>
<div class="cb" style="left:48px;top:333.3px"></div>
<div class="t l b" style="left:71px;top:328.8px;line-height:18.2px;transform:scaleX(0.93);-webkit-text-stroke:0.22px currentColor">Garage Door Timber Jamb</div>
<div class="box" style="left:536.2px;top:330.6px;width:33.5px;height:13.7px"></div>
<div class="t l" style="left:542.6px;top:328.8px;line-height:18.2px;transform:scaleX(0.78)">YES</div>
<svg class="a" style="left:560px;top:334px" width="8" height="6" viewBox="0 0 8 6"><path d="M1.4 1.9 L3.6 4.0 L5.8 1.9" fill="none" stroke="#151515" stroke-width="1.45" stroke-linecap="round"/></svg>
<div class="inp" style="left:574px;top:329.9px;width:66.4px;height:15.3px"></div>
<div class="t c" style="left:574.8px;top:328.8px;width:65.7px;line-height:18.2px;">21.60</div>
<div class="t c" style="left:642.5px;top:328.8px;width:51.7px;line-height:18.2px;">Each</div>
<div class="t c" style="left:694.2px;top:328.8px;width:53.8px;line-height:18.2px;">12.30</div>
<div class="t c" style="left:748px;top:328.8px;width:52.7px;line-height:18.2px;">265.68</div>
<svg class="a" style="left:879.6px;top:332.9px" width="8.4" height="8.4" viewBox="0 0 8.4 8.4"><rect x="0" y="0" width="8.4" height="8.4" rx="1.5" fill="#707070"/><path d="M1.8 4.3 L3.5 6 L6.7 2" fill="none" stroke="#fff" stroke-width="1.3"/></svg>
<div class="t c" style="left:10.1px;top:347.3px;width:26px;line-height:18.2px;">18</div>
<div class="cb" style="left:48px;top:351.5px"></div>
<div class="t l b" style="left:71px;top:347px;line-height:18.2px;transform:scaleX(0.93);-webkit-text-stroke:0.22px currentColor">Frame Hardware</div>
<div class="box" style="left:536.2px;top:348.8px;width:33.5px;height:13.7px"></div>
<div class="t l" style="left:542.6px;top:347px;line-height:18.2px;transform:scaleX(0.78)">YES</div>
<svg class="a" style="left:560px;top:352.2px" width="8" height="6" viewBox="0 0 8 6"><path d="M1.4 1.9 L3.6 4.0 L5.8 1.9" fill="none" stroke="#151515" stroke-width="1.45" stroke-linecap="round"/></svg>
<div class="dis" style="left:574.3px;top:348.2px;width:54.4px;height:14.8px"></div>
<div class="t c" style="left:575.1px;top:347px;width:54.1px;line-height:18.2px;color:#7a7a7a">469.33</div>
<svg class="a" style="left:630.6px;top:350.2px" width="9" height="9" viewBox="0 0 9 9"><path d="M1.31 5.44 A3.35 3.35 0 0 1 6.56 1.76" fill="none" stroke="#7a7a7a" stroke-width="0.9"/><path d="M7.67 2.62 L5.36 2.98 L7.45 0.30 Z" fill="#7a7a7a"/><path d="M7.69 3.36 A3.35 3.35 0 0 1 2.44 7.04" fill="none" stroke="#7a7a7a" stroke-width="0.9"/><path d="M1.33 6.18 L3.64 5.82 L1.55 8.50 Z" fill="#7a7a7a"/></svg>
<div class="t c" style="left:642.5px;top:347px;width:51.7px;line-height:18.2px;">Each</div>
<div class="t c" style="left:694.2px;top:347px;width:53.8px;line-height:18.2px;">15.00</div>
<div class="t c" style="left:748px;top:347px;width:52.7px;line-height:18.2px;">7,039.95</div>
<svg class="a" style="left:879.6px;top:351.1px" width="8.4" height="8.4" viewBox="0 0 8.4 8.4"><rect x="0" y="0" width="8.4" height="8.4" rx="1.5" fill="#707070"/><path d="M1.8 4.3 L3.5 6 L6.7 2" fill="none" stroke="#fff" stroke-width="1.3"/></svg>
<div class="t c" style="left:10.1px;top:365.5px;width:26px;line-height:18.2px;">19</div>
<div class="cb" style="left:48px;top:369.7px"></div>
<div class="t l b" style="left:71px;top:365.2px;line-height:18.2px;transform:scaleX(0.93);-webkit-text-stroke:0.22px currentColor">Wall Sarking (Full Wall Wrap)</div>
<div class="box" style="left:536.2px;top:367px;width:33.5px;height:13.7px"></div>
<div class="t l" style="left:542.6px;top:365.2px;line-height:18.2px;transform:scaleX(0.78)">YES</div>
<svg class="a" style="left:560px;top:370.4px" width="8" height="6" viewBox="0 0 8 6"><path d="M1.4 1.9 L3.6 4.0 L5.8 1.9" fill="none" stroke="#151515" stroke-width="1.45" stroke-linecap="round"/></svg>
<div class="dis" style="left:574.3px;top:366.4px;width:54.4px;height:14.8px"></div>
<div class="t c" style="left:575.1px;top:365.2px;width:54.1px;line-height:18.2px;color:#7a7a7a">457.38</div>
<svg class="a" style="left:630.6px;top:368.4px" width="9" height="9" viewBox="0 0 9 9"><path d="M1.31 5.44 A3.35 3.35 0 0 1 6.56 1.76" fill="none" stroke="#7a7a7a" stroke-width="0.9"/><path d="M7.67 2.62 L5.36 2.98 L7.45 0.30 Z" fill="#7a7a7a"/><path d="M7.69 3.36 A3.35 3.35 0 0 1 2.44 7.04" fill="none" stroke="#7a7a7a" stroke-width="0.9"/><path d="M1.33 6.18 L3.64 5.82 L1.55 8.50 Z" fill="#7a7a7a"/></svg>
<div class="t c" style="left:642.5px;top:365.2px;width:51.7px;line-height:18.2px;">Each</div>
<div class="t c" style="left:694.2px;top:365.2px;width:53.8px;line-height:18.2px;">7.00</div>
<div class="t c" style="left:748px;top:365.2px;width:52.7px;line-height:18.2px;">3,201.66</div>
<svg class="a" style="left:879.6px;top:369.3px" width="8.4" height="8.4" viewBox="0 0 8.4 8.4"><rect x="0" y="0" width="8.4" height="8.4" rx="1.5" fill="#707070"/><path d="M1.8 4.3 L3.5 6 L6.7 2" fill="none" stroke="#fff" stroke-width="1.3"/></svg>
<div class="t c" style="left:10.1px;top:383.7px;width:26px;line-height:18.2px;">20</div>
<div class="cb" style="left:48px;top:387.9px"></div>
<div class="t l b" style="left:71px;top:383.4px;line-height:18.2px;transform:scaleX(0.93);-webkit-text-stroke:0.22px currentColor">Crane &amp; Forklift</div>
<div class="box" style="left:536.2px;top:385.2px;width:33.5px;height:13.7px"></div>
<div class="t l" style="left:542.6px;top:383.4px;line-height:18.2px;transform:scaleX(0.78)">YES</div>
<svg class="a" style="left:560px;top:388.6px" width="8" height="6" viewBox="0 0 8 6"><path d="M1.4 1.9 L3.6 4.0 L5.8 1.9" fill="none" stroke="#151515" stroke-width="1.45" stroke-linecap="round"/></svg>
<div class="inp" style="left:574px;top:384.5px;width:66.4px;height:15.3px"></div>
<div class="t c" style="left:574.8px;top:383.4px;width:65.7px;line-height:18.2px;">15.00</div>
<div class="t c" style="left:642.5px;top:383.4px;width:51.7px;line-height:18.2px;">Hours</div>
<div class="t c" style="left:694.2px;top:383.4px;width:53.8px;line-height:18.2px;">265.00</div>
<div class="t c" style="left:748px;top:383.4px;width:52.7px;line-height:18.2px;">3,975.00</div>
<svg class="a" style="left:879.6px;top:387.5px" width="8.4" height="8.4" viewBox="0 0 8.4 8.4"><rect x="0" y="0" width="8.4" height="8.4" rx="1.5" fill="#707070"/><path d="M1.8 4.3 L3.5 6 L6.7 2" fill="none" stroke="#fff" stroke-width="1.3"/></svg>
<div class="a" style="left:8.5px;top:395.5px;width:1016px;height:11px;background:#fcfcfc"></div>
<svg class="a" style="left:13px;top:397px" width="7" height="7" viewBox="0 0 7 7"><path d="M0.9 3.1 L5.4 0.2 L5.4 6.0 Z" fill="#7d7d7d"/></svg>
<div class="a" style="left:23.6px;top:397.1px;width:1010px;height:5.8px;border-radius:2.9px;background:#8b8b8b"></div>
<div class="a" style="left:9.3px;top:406px;width:1020px;height:50px;background:#fff;border:1px solid #5f9ea0"></div>
<div class="t l" style="left:12px;top:409.2px;line-height:10px;color:#2a2a35">Sub-Group</div>
<div class="t l" style="left:83px;top:409.2px;line-height:10px;color:#2a2a35">Total Costs</div>
<div class="t l" style="left:214.7px;top:409.2px;line-height:10px;color:#2a2a35">127,550.72</div>
<div class="t l" style="left:12px;top:422.9px;line-height:10px;color:#2a2a35">Sub-Group</div>
<div class="t l" style="left:83px;top:422.9px;line-height:10px;color:#2a2a35">Total Quotes</div>
<div class="t l" style="left:214.7px;top:422.9px;line-height:10px;color:#2a2a35">69,030.79</div>
<div class="t l" style="left:12px;top:436.6px;line-height:10px;color:#2a2a35">Spec</div>
<div class="t l" style="left:83px;top:436.6px;line-height:10px;color:#2a2a35">Total Costs *</div>
<div class="t l" style="left:214.7px;top:436.6px;line-height:10px;color:#2a2a35">1,363,341.02</div>
</body></html>
